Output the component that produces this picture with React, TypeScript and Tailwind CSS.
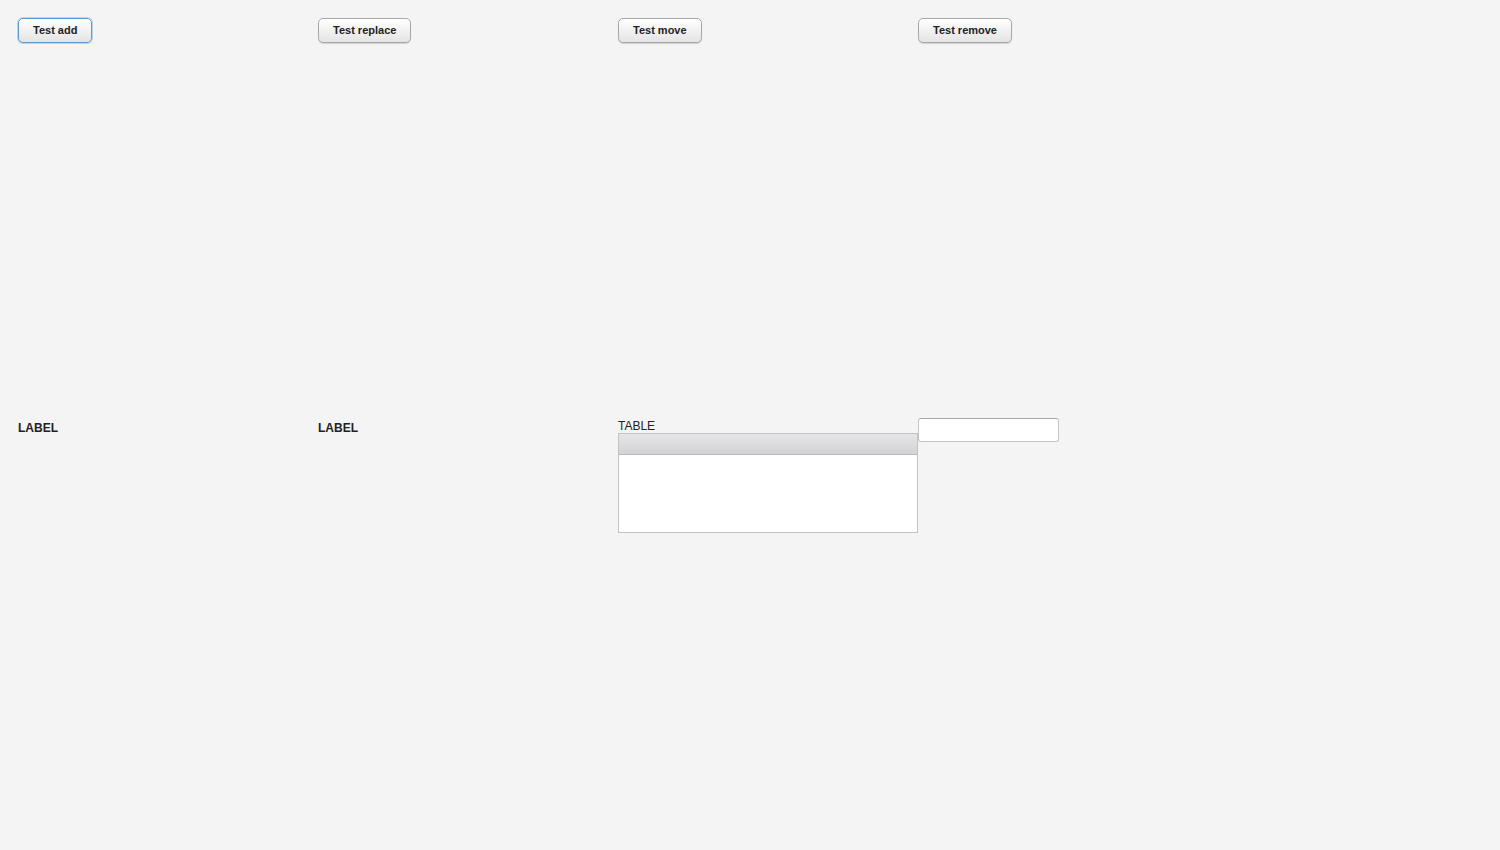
const buttons = ["Test add", "Test replace", "Test move", "Test remove"];

function Btn({ label, focused }: { label: string; focused?: boolean }) {
  return (
    <button
      className={
        "block h-[25px] px-[14px] rounded-[5px] border bg-gradient-to-b from-white to-[#e4e4e4] text-[11px] font-bold leading-none text-[#222] " +
        (focused
          ? "border-[#5a9bd5] shadow-[0_0_0_1px_#b5d4f0]"
          : "border-[#a8a8a8] shadow-[0_1px_1px_rgba(0,0,0,0.15)]")
      }
    >
      {label}
    </button>
  );
}

export default function App() {
  return (
    <div className="min-h-screen w-full bg-[#f4f4f4] pt-[18px] pl-[18px] font-['Liberation_Sans',Arial,sans-serif] text-[#222]">
      <div className="grid grid-cols-[300px_300px_300px_300px] grid-rows-[400px_auto]">
        {buttons.map((b, i) => (
          <div key={b}>
            <Btn label={b} focused={i === 0} />
          </div>
        ))}

        <div className="pt-[1px] text-[12px] font-bold leading-[18px]">LABEL</div>
        <div className="pt-[1px] text-[12px] font-bold leading-[18px]">LABEL</div>

        <div>
          <div className="h-[15px] pt-[2px] text-[12px] leading-[13px]">TABLE</div>
          <div className="w-[300px] h-[100px] border border-[#c2c2c2] bg-white">
            <div className="h-[21px] border-b border-[#b9b9b9] bg-gradient-to-b from-[#e6e6e8] to-[#d3d3d6]" />
          </div>
        </div>

        <div>
          <input className="block w-[141px] h-[24px] rounded-[3px] border border-[#c5c5c5] border-t-[#a9a9a9] bg-white px-1 text-[13px] outline-none" />
        </div>
      </div>
    </div>
  );
}
